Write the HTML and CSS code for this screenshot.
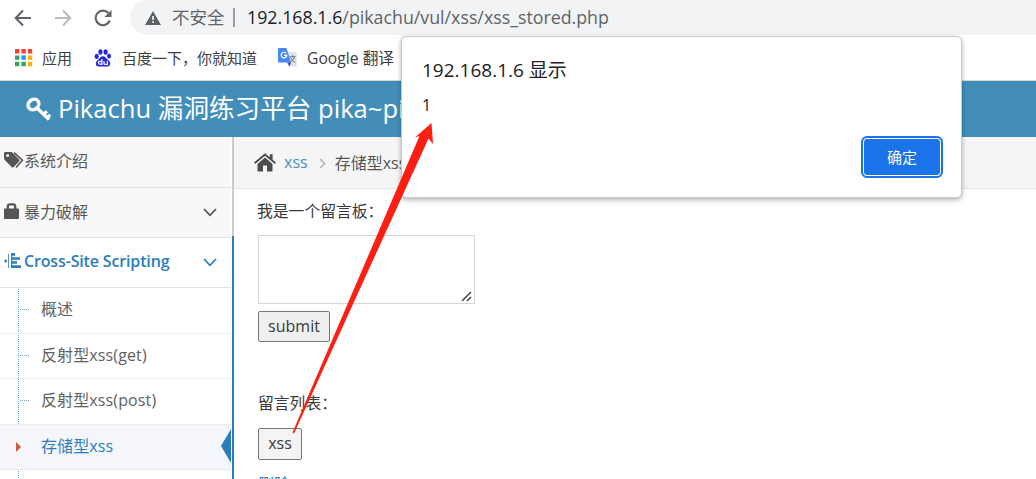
FILE: index.html
```html
<!DOCTYPE html>
<html lang="zh-CN">
<head>
    <meta charset="UTF-8">
    <meta name="viewport" content="width=device-width, initial-scale=1.0">
    <title>Pikachu</title>
    <link rel="stylesheet" href="styles.css">
</head>
<body>
    <div class="toolbar">
        <svg class="nav-icon" width="18" height="18" viewBox="0 0 18 18" fill="none" stroke="#5f6368" stroke-width="2"><path d="M17 9H2M9 1.5L1.7 9L9 16.5"/></svg>
        <svg class="nav-icon" width="18" height="18" viewBox="0 0 18 18" fill="none" stroke="#babcbe" stroke-width="2"><path d="M1 9H16M9 1.5L16.3 9L9 16.5"/></svg>
        <svg class="nav-icon" width="18" height="18" viewBox="0 0 18 18"><path d="M15.8 11.5A7.3 7.3 0 1 1 14.4 4" fill="none" stroke="#5f6368" stroke-width="2.1"/><path d="M17.5 1V8H10.5Z" fill="#5f6368"/></svg>
        <div class="address">
            <svg width="16" height="14" viewBox="0 0 16 14"><path d="M8 0L16 14H0Z" fill="#5f6368"/><path d="M8 5V9M8 10.3V12" stroke="#f1f3f4" stroke-width="1.7"/></svg>
            <span class="insecure">不安全</span>
            <span class="divider"></span>
            <span class="url"><b>192.168.1.6</b>/pikachu/vul/xss/xss_stored.php</span>
        </div>
    </div>

    <div class="bookmarks">
        <svg class="apps" width="18" height="18" viewBox="0 0 18 18">
            <path d="M0 0h4.4v4.4H0zM6.4 0h4.4v4.4H6.4zM12.8 0h4.4v4.4h-4.4z" fill="#f44336"/>
            <path d="M0 6.4h4.4v4.4H0zM0 12.8h4.4v4.4H0zM6.4 12.8h4.4v4.4H6.4z" fill="#35a35a"/>
            <path d="M6.4 6.4h4.4v4.4H6.4z" fill="#2196f3"/>
            <path d="M12.8 6.4h4.4v4.4h-4.4zM12.8 12.8h4.4v4.4h-4.4z" fill="#fbb300"/>
        </svg>
        <span class="bm-apps">应用</span>
        <svg class="paw" width="18" height="18" viewBox="0 0 18 18" fill="#2529d8">
            <ellipse cx="2.7" cy="7.4" rx="2.1" ry="2.6"/><ellipse cx="6.4" cy="3" rx="2.1" ry="2.8"/>
            <ellipse cx="11.6" cy="3" rx="2.1" ry="2.8"/><ellipse cx="15" cy="7.1" rx="2" ry="2.5"/>
            <path d="M9 7.2C11.5 7.2 12.2 9.6 14.3 11.2C17.5 13.6 16.4 17.6 13 17.6H5C1.4 17.6.8 13.6 3.5 11.3C5.6 9.6 6.3 7.2 9 7.2Z"/>
            <path d="M7.9 10V15.9M7.9 15.2H5.8Q4.4 15.2 4.4 13.7T5.8 12.3H7.9M10 12V14.4Q10 15.3 11 15.3H13.4M13.4 12V16" fill="none" stroke="#fff" stroke-width="1.2"/>
        </svg>
        <span class="bm-baidu">百度一下，你就知道</span>
        <svg class="translate" width="19" height="19" viewBox="0 0 19 19">
            <path d="M7 4H17.5Q18.7 4 18.7 5V17.2Q18.7 18.4 17.5 18.4H11.5Z" fill="#dfe1e3"/>
            <path d="M11.5 8.7H17.6M14.5 7.2V8.7M16.4 9Q15.5 13 11.7 14.6M12.7 9.7Q14 13 17.4 14.5" fill="none" stroke="#687782" stroke-width="1"/>
            <path d="M1.2 0H8.4L13 14.4H1.2Q0 14.4 0 13.2V1.2Q0 0 1.2 0Z" fill="#4688f4"/>
            <path d="M9 14.4H13L11.5 18.4Z" fill="#3153b5"/>
            <path d="M8.2 5.3A2.8 2.8 0 1 0 8.8 7.4H6" fill="none" stroke="#fff" stroke-width="1.2"/>
        </svg>
        <span class="bm-google">Google 翻译</span>
    </div>

    <header class="navbar">
        <svg width="25" height="25" viewBox="0 0 25 25"><g fill="none" stroke="#fff"><ellipse cx="7.5" cy="7.5" rx="5.7" ry="4.9" transform="rotate(-42 7.5 7.5)" stroke-width="3.5"/><path d="M11.5 11.5L23 22.5M17.5 17.7L20.8 14.2M20.8 21.2L24.2 17.8" stroke-width="3.2"/></g></svg>
        <span class="brand">Pikachu 漏洞练习平台 pika~pi</span>
    </header>

    <div class="main">
        <nav class="sidebar">
            <div class="item">
                <svg class="icon" width="20" height="18" viewBox="0 0 20 18"><path d="M0 1.4Q0 0 1.4 0H7Q8 0 9 1L15 7.3Q16 8.3 15 9.4L9.7 15Q8.7 16 7.6 15L1 8.2Q0 7.2 0 6.2Z" fill="#555"/><circle cx="3.6" cy="3.5" r="1.5" fill="#f8f8f8"/><path d="M10.2.6L18.4 8.2L12 15.5" fill="none" stroke="#555" stroke-width="1.6"/></svg>
                <span>系统介绍</span>
            </div>
            <div class="item">
                <svg class="icon" width="20" height="18" viewBox="0 0 20 18"><path d="M0 6.5Q0 5.5 1 5.5H14Q15 5.5 15 6.5V15Q15 16 14 16H1Q0 16 0 15Z" fill="#555"/><path d="M3.8 6V3.5Q3.8 1.4 6 1.4H9Q11.2 1.4 11.2 3.5V6" fill="none" stroke="#555" stroke-width="2.3"/></svg>
                <span>暴力破解</span>
                <svg class="chevron" width="14" height="9" viewBox="0 0 14 9"><path d="M1 1L7 7.3L13 1"/></svg>
            </div>
            <div class="item open">
                <svg class="icon" width="20" height="18" viewBox="1 0 20 18" fill="#2b7dbc"><path d="M0 7.5h2.2V5.7L4.5 8L2.2 10.3V8.6H0zM5 1h.8v14H5zM8 0h1.2v15H8zM9 0h3v2.8H9zM9 4.2h8v2.6H9zM9 8.2h5v2.6H9zM9 12.2h9v2.8H9z"/></svg>
                <span>Cross-Site Scripting</span>
                <svg class="chevron" width="14" height="9" viewBox="0 0 14 9"><path d="M1 1L7 7.3L13 1"/></svg>
            </div>
            <div class="submenu">
                <div class="sub">概述</div>
                <div class="sub">反射型xss(get)</div>
                <div class="sub">反射型xss(post)</div>
                <div class="sub active">存储型xss</div>
                <div class="sub"></div>
            </div>
        </nav>

        <div class="content">
            <div class="breadcrumb">
                <svg width="22" height="19" viewBox="0 0 22 19" fill="#4c4c4c"><path d="M11 4.6L18.5 11V18Q18.5 18.6 17.8 18.6H13V12.5H9V18.6H4.2Q3.5 18.6 3.5 18V11Z"/><path d="M11 .2L15.8 4.3V1.2H18.6V6.7L22 9.6L20.8 11L11 2.7L1.2 11L0 9.6Z"/></svg>
                <a class="crumb">xss</a>
                <svg class="crumb-arrow" width="7" height="11" viewBox="0 0 7 11"><path d="M1 1L5.7 5.5L1 10" fill="none" stroke="#b2b6bf" stroke-width="1.7"/></svg>
                <span>存储型xss</span>
            </div>
            <div class="page">
                <p class="title">我是一个留言板：</p>
                <div class="message-box">
                    <textarea class="message"></textarea>
                    <svg class="grip" width="11" height="11" viewBox="0 0 11 11"><path d="M1 10L10 1M6 10L10 6" stroke="#444" stroke-width="1.5" fill="none"/></svg>
                </div>
                <button class="submit">submit</button>
                <p class="list-title">留言列表：</p>
                <button class="xss">xss</button>
                <a class="delete">删除</a>
            </div>
        </div>
    </div>

    <div class="dialog">
        <div class="dialog-title">192.168.1.6 显示</div>
        <div class="dialog-text">1</div>
        <button class="ok">确定</button>
    </div>

    <svg class="arrow" width="144" height="312" viewBox="0 0 144 312"><path d="M0.5 310.5L127.5 14L123 15.5L139.5 1L141 22L136.5 16.5L2 311.5Z" fill="#ff1e12"/></svg>
</body>
</html>
```
FILE: styles.css
```css
* {
    box-sizing: border-box;
}
body {
    margin: 0;
    height: 479px;
    overflow: hidden;
    position: relative;
    background: #fff;
    color: #393939;
    font-family: "Open Sans", "Noto Sans CJK SC", sans-serif;
    font-size: 16px;
}
svg {
    flex: none;
}
p {
    margin: 0;
}
button, textarea {
    font-family: inherit;
    font-size: 16px;
    color: #393939;
}
.toolbar {
    display: flex;
    align-items: center;
    height: 35px;
    padding-left: 14px;
    white-space: nowrap;
}
.nav-icon {
    margin-right: 22px;
}
.address {
    display: flex;
    align-items: center;
    flex: 1;
    height: 35px;
    margin-left: -4px;
    padding-left: 15px;
    border-radius: 18px 0 0 18px;
    background: #f1f3f4;
    color: #5f6368;
    font-size: 17.8px;
}
.insecure {
    width: 54px;
    margin-left: 11px;
    padding-bottom: 2px;
    font-size: 17.5px;
}
.divider {
    width: 2px;
    height: 19px;
    margin: 0 12px 0 7px;
    background: #9b9da0;
}
.url {
    padding-bottom: 2px;
}
.url b {
    color: #202124;
    font-weight: normal;
}
.bookmarks {
    display: flex;
    align-items: center;
    height: 46px;
    padding-left: 15px;
    border-bottom: 1px solid #d5d5d5;
    color: #3c4043;
    font-size: 15px;
    white-space: nowrap;
}
.bm-apps {
    width: 52px;
    margin-left: 9px;
}
.bm-baidu {
    width: 156px;
    margin-left: 10px;
}
.bm-google {
    margin-left: 10px;
    font-size: 15.7px;
}
.navbar {
    display: flex;
    align-items: center;
    height: 56px;
    padding-left: 26px;
    background: #438eb9;
    color: #fff;
    font-size: 25.6px;
    white-space: nowrap;
}
.brand {
    margin-left: 7px;
    padding-bottom: 4px;
}
.main {
    display: flex;
    height: 342px;
    overflow: hidden;
}
.sidebar {
    display: flex;
    flex-direction: column;
    width: 234px;
    border-right: 2px solid #2b7dbc;
    border-image: linear-gradient(#ccc 100px, #2b7dbc 100px) 2;
    background: #fff;
}
.item {
    display: flex;
    align-items: center;
    height: 50px;
    width: 231px;
    flex: none;
    padding: 0 14px 2px 4px;
    border-bottom: 1px solid #e0e0e0;
    background: #f8f8f8;
    color: #585858;
}
.item:first-child {
    height: 51px;
}
.item span {
    padding-bottom: 2px;
}
.chevron {
    margin-left: auto;
    margin-top: 2px;
    fill: none;
    stroke: #555;
    stroke-width: 1.8;
}
.open {
    background: #fff;
    color: #2b7dbc;
    font-weight: 600;
    letter-spacing: -0.15px;
}
.open .chevron {
    stroke: #2b7dbc;
}
.submenu {
    position: relative;
    width: 231px;
}
.submenu::before {
    content: "";
    position: absolute;
    left: 18px;
    top: 1px;
    bottom: 0;
    border-left: 1px dotted #6fa3c9;
}
.sub {
    position: relative;
    height: 45.6px;
    padding-left: 41px;
    border-bottom: 1px dotted #ddd;
    line-height: 43px;
    letter-spacing: 0.12px;
    color: #616161;
}
.sub::before {
    content: "";
    position: absolute;
    left: 20px;
    top: 21px;
    width: 9px;
    border-top: 1px dotted #6fa3c9;
}
.active {
    background: #f4f6fb;
    color: #2b7dbc;
}
.active::before {
    left: 16px;
    top: 17px;
    width: 0;
    border: 5px solid transparent;
    border-left-color: #c86139;
    border-right: 0;
}
.active::after {
    content: "";
    position: absolute;
    right: 0;
    top: 4px;
    border: 17px solid transparent;
    border-right: 10px solid #2b7dbc;
    border-left: 0;
}
.content {
    flex: 1;
}
.breadcrumb {
    display: flex;
    align-items: center;
    height: 52px;
    padding: 0 0 1px 20px;
    border-bottom: 1px solid #e5e5e5;
    background: #f5f5f5;
    color: #555;
}
.breadcrumb a, .breadcrumb span {
    padding-bottom: 1px;
}
.crumb {
    margin-left: 8px;
    color: #4c8fbd;
}
.crumb-arrow {
    margin: 2px 9px 0 11px;
}
.page {
    display: flex;
    flex-direction: column;
    align-items: flex-start;
    padding: 10px 0 0 24px;
}
.title, .list-title {
    height: 24px;
    line-height: 24px;
    font-size: 15.8px;
}
.title {
    margin-left: -1px;
}
.message-box {
    position: relative;
    margin-top: 12px;
    height: 69px;
}
.message {
    display: block;
    width: 217px;
    height: 69px;
    border: 1px solid #d5d5d5;
    resize: none;
}
.grip {
    position: absolute;
    right: 3px;
    bottom: 2px;
}
.submit, .xss {
    height: 31px;
    margin-top: 7px;
    padding: 0 0 2px;
    border: 1px solid #767676;
    border-radius: 2px;
    background: #efefef;
}
.submit {
    width: 72px;
}
.xss {
    width: 44px;
    height: 32px;
    margin-top: 13px;
    background: #f4f4f4;
}
.list-title {
    margin-top: 49px;
}
.delete {
    margin-top: 14px;
    color: #337ab7;
    line-height: 20px;
}
.dialog {
    position: absolute;
    left: 401px;
    top: 36px;
    width: 561px;
    height: 162px;
    padding: 20px;
    border: 1px solid #c8c8c8;
    border-radius: 5px;
    background: #fff;
    box-shadow: 0 2px 5px rgba(0, 0, 0, 0.3);
    color: #202124;
}
.dialog-title {
    height: 27px;
    line-height: 27px;
    font-size: 19px;
}
.dialog-text {
    margin-top: 9px;
    line-height: 24px;
    font-size: 16px;
}
.ok {
    display: block;
    width: 78px;
    height: 38px;
    margin: 21px 0 0 auto;
    padding-bottom: 2px;
    border: 1px solid #fff;
    border-radius: 4px;
    outline: 2px solid #1a73e8;
    background: #1a73e8;
    color: #fff;
    font-size: 15px;
}
.arrow {
    position: absolute;
    left: 292px;
    top: 122px;
}
```
